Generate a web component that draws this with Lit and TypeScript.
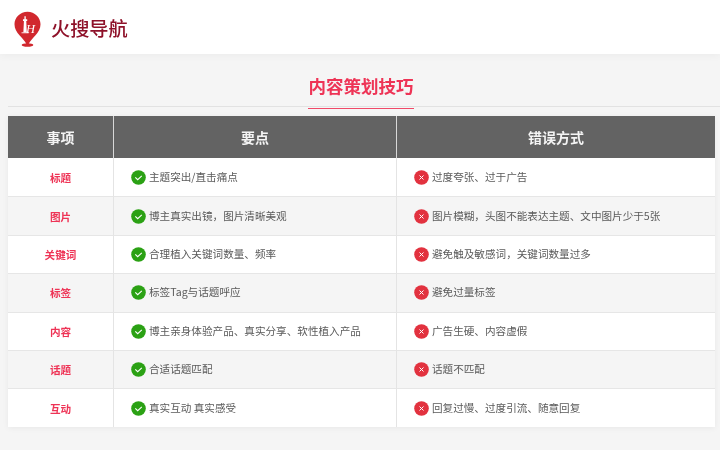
import { LitElement, html, css, svg } from "lit";
import { customElement } from "lit/decorators.js";

const ROWS: [string, string, string][] = [
  ["标题", "主题突出/直击痛点", "过度夸张、过于广告"],
  ["图片", "博主真实出镜，图片清晰美观", "图片模糊，头图不能表达主题、文中图片少于5张"],
  ["关键词", "合理植入关键词数量、频率", "避免触及敏感词，关键词数量过多"],
  ["标签", "标签Tag与话题呼应", "避免过量标签"],
  ["内容", "博主亲身体验产品、真实分享、软性植入产品", "广告生硬、内容虚假"],
  ["话题", "合适话题匹配", "话题不匹配"],
  ["互动", "真实互动 真实感受", "回复过慢、过度引流、随意回复"],
];

const logo = svg`<svg class="logo" viewBox="0 0 28 37" width="27" height="36" aria-hidden="true">
  <path d="M14 .5C6.500.5.500 6.300.500 13.600c0 4.700 2.300 8.200 5.400 11.600 3 3.200 5.600 6.200 7 9h2.200c1.400-2.800 4-5.800 7-9 3.100-3.400 5.400-6.900 5.400-11.600C27.500 6.300 21.500.5 14 .5z" fill="#d1282e"/>
  <ellipse cx="14" cy="35" rx="6" ry="1.800" fill="#d1282e"/>
  <path d="M9.300 8.500h4.400v1.600H9.300zM10.800 5.200h1.400v3.300h-1.400zM10.300 10.100h2.400l.6 12h-3.600z" fill="#fff"/>
  <path d="M7.800 22h7.400v.9H7.800z" fill="#fff"/>
  <text x="12.500" y="22.800" class="logo-h">H</text>
</svg>`;

const check = svg`<svg class="mark" viewBox="0 0 15 15" width="15" height="15" aria-hidden="true">
  <circle cx="7.500" cy="7.500" r="7.300" fill="#2ba114"/>
  <path d="M4.300 7.300l2.400 2.400 4.100-3.900" fill="none" stroke="#fff" stroke-width="1.100"/>
</svg>`;

const cross = svg`<svg class="mark" viewBox="0 0 15 15" width="15" height="15" aria-hidden="true">
  <circle cx="7.500" cy="7.500" r="7.300" fill="#e2323f"/>
  <path d="M5.500 5.500l4 4M9.500 5.500l-4 4" fill="none" stroke="#fff" stroke-width="1"/>
</svg>`;

@customElement("app-root")
export class AppRoot extends LitElement {
  static styles = css`
    :host {
      display: block;
      width: 720px;
      height: 450px;
      overflow: hidden;
      background: #f5f5f5;
      font-family: "Noto Sans CJK SC", "Liberation Sans", sans-serif;
      filter: blur(0.3px);
    }
    .top {
      height: 54px;
      box-sizing: border-box;
      background: #fff;
      box-shadow: 0 2px 8px rgba(0, 0, 0, 0.04);
      display: flex;
      align-items: center;
      gap: 10px;
      padding: 4px 0 0 14px;
    }
    .logo { flex: none; }
    .logo-h {
      font-family: "Liberation Serif", serif;
      font-size: 13px;
      font-style: italic;
      fill: #fff;
    }
    .brand {
      font-size: 19.200px;
      font-weight: 500;
      color: #8e1129;
      line-height: 1;
    }
    .head {
      margin: 0 0 0 8px;
      padding-right: 6px;
      height: 53px;
      box-sizing: border-box;
      border-bottom: 1px solid #e2e2e2;
      display: flex;
      justify-content: center;
    }
    .head h1 {
      margin: 0 0 -2px 0;
      width: 106px;
      height: 54.500px;
      box-sizing: border-box;
      padding-top: 19px;
      border-bottom: 1.500px solid #f04a68;
      text-align: center;
      font-size: 17.500px;
      font-weight: 700;
      line-height: 26px;
      color: #ee3456;
      white-space: nowrap;
    }
    .table {
      margin: 9px 5px 0 8px;
      display: grid;
      grid-template-columns: 105px 283px 1fr;
      grid-template-rows: 42px;
      grid-auto-rows: 38.400px;
      background: #fff;
      box-shadow: 0 1px 6px rgba(0, 0, 0, 0.06);
    }
    .th {
      background: #636363;
      color: #f4f4f4;
      font-size: 14px;
      font-weight: 700;
      display: flex;
      align-items: center;
      justify-content: center;
      box-sizing: border-box;
    }
    .th + .th { border-left: 1px solid #d8d8d8; }
    .td {
      display: flex;
      align-items: center;
      box-sizing: border-box;
      border-top: 1px solid #e6e6e6;
      font-size: 10.600px;
      color: #5a5a5a;
      gap: 3px;
      white-space: nowrap;
    }
    .td.first { border-top: none; }
    .name {
      justify-content: center;
      font-weight: 700;
      color: #ee3456;
    }
    .point, .wrong { border-left: 1px solid #e4e4e4; padding-left: 17px; padding-bottom: 2px; }
    .alt { background: #f5f5f5; }
    .mark { flex: none; margin-top: 2px; }
  `;

  render() {
    return html`
      <header class="top">${logo}<span class="brand">火搜导航</span></header>
      <div class="head"><h1>内容策划技巧</h1></div>
      <section class="table">
        <div class="th">事项</div>
        <div class="th">要点</div>
        <div class="th">错误方式</div>
        ${ROWS.map((r, i) => {
          const cls = `${i % 2 ? "alt" : ""} ${i === 0 ? "first" : ""}`;
          return html`
            <div class="td name ${cls}">${r[0]}</div>
            <div class="td point ${cls}">${check}<span>${r[1]}</span></div>
            <div class="td wrong ${cls}">${cross}<span>${r[2]}</span></div>
          `;
        })}
      </section>
    `;
  }
}
